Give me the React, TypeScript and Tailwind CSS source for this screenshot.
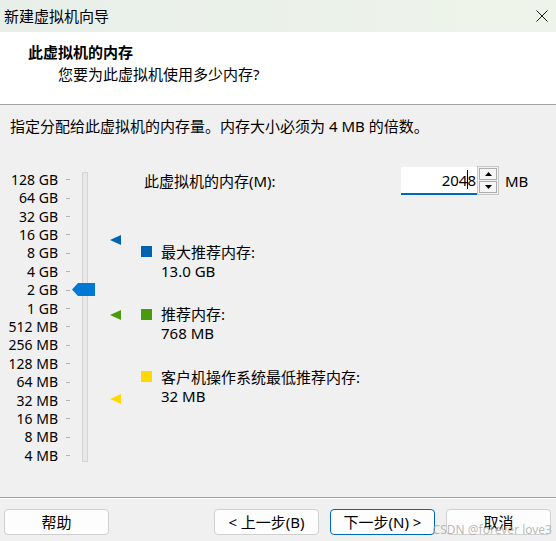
import React from 'react';

// 刻度标签，从上到下
const scaleLabels = [
  '128 GB', '64 GB', '32 GB', '16 GB', '8 GB', '4 GB', '2 GB', '1 GB',
  '512 MB', '256 MB', '128 MB', '64 MB', '32 MB', '16 MB', '8 MB', '4 MB',
];

const legends = [
  { color: 'bg-[#0063b1]', title: '最大推荐内存:', value: '13.0 GB', mt: 'mt-[46.5px]' },
  { color: 'bg-[#4a9a0e]', title: '推荐内存:', value: '768 MB', mt: 'mt-[24.5px]' },
  { color: 'bg-[#ffd800]', title: '客户机操作系统最低推荐内存:', value: '32 MB', mt: 'mt-[24.5px]' },
];

function Marker({ color, top }: { color: string; top: number }) {
  return (
    <svg className="absolute left-[110px]" style={{ top }} width="11" height="10" viewBox="0 0 11 10">
      <polygon points="0,5 11,0 11,10" fill={color} />
    </svg>
  );
}

function Button({ children, primary }: { children: React.ReactNode; primary?: boolean }) {
  return (
    <button
      className={`h-[26px] w-[105px] rounded-[4px] border bg-[#fdfdfd] text-[15px] leading-[20px] text-black ${
        primary ? 'border-[#0067c0]' : 'border-[#d0d0d0]'
      }`}
    >
      {children}
    </button>
  );
}

export default function App() {
  return (
    <div className="relative flex h-[541px] w-[556px] flex-col overflow-hidden bg-[#f0f0f0] font-['Noto_Sans','Noto_Sans_CJK_SC',sans-serif] text-[15px] leading-[20px] text-black">
      {/* 标题栏 */}
      <div className="flex h-[32px] shrink-0 items-center justify-between bg-gradient-to-r from-[#e8efe9] to-[#eef4ea] pl-[4px] pr-[8px]">
        <span className="text-[15px]">新建虚拟机向导</span>
        <svg width="12" height="12" viewBox="0 0 12 12">
          <path d="M0.5 0.5 L11.5 11.5 M11.5 0.5 L0.5 11.5" stroke="#1a1a1a" strokeWidth="1" />
        </svg>
      </div>

      {/* 页眉 */}
      <div className="h-[73px] shrink-0 border-b border-[#a0a0a0] bg-white pt-[10px]">
        <div className="pl-[28px] font-bold">此虚拟机的内存</div>
        <div className="mt-[2px] pl-[58px]">您要为此虚拟机使用多少内存?</div>
      </div>

      {/* 主体 */}
      <div className="flex-1 pl-[10px]">
        <p className="mt-[11px]">指定分配给此虚拟机的内存量。内存大小必须为 4 MB 的倍数。</p>

        <div className="-ml-[10px] mt-[29px] flex">
          {/* 滑块 */}
          <div className="relative w-[141px] shrink-0 pt-[5.5px]">
            <div className="flex">
              <div className="flex flex-col">
                {scaleLabels.map((l) => (
                  <div key={l} className="flex h-[18.42px] items-center">
                    <span className="w-[58px] whitespace-nowrap text-right text-[14px]">{l}</span>
                    <span className="ml-[8px] h-px w-[4px] bg-[#b4b4b4]" />
                  </div>
                ))}
              </div>
              <div className="mb-[3px] ml-[12px] mt-[1.5px] w-[6px] border border-[#d4d4d4] bg-[#e8e8e8]" />
            </div>
            <svg className="absolute left-[72px] top-[118px]" width="23" height="13" viewBox="0 0 23 13">
              <polygon points="0,6.5 6,0 23,0 23,13 6,13" fill="#0078d4" />
            </svg>
            <Marker color="#0063b1" top={69.5} />
            <Marker color="#4a9a0e" top={145} />
            <Marker color="#ffd800" top={229} />
          </div>

          {/* 右侧 */}
          <div className="flex flex-1 flex-col">
            <div className="flex h-[31px] items-center">
              <span className="w-[260px] pl-[3px]">此虚拟机的内存(M):</span>
              <div className="flex h-[28px] w-[76px] items-center justify-end border-b-2 border-[#0067c0] bg-white pr-[1px]">
                <span>204</span>
                <span className="-mr-[1px] inline-block h-[19px] w-px bg-black" />
                <span>8</span>
              </div>
              <div className="flex h-[29px] w-[22px] flex-col border border-[#c8c8c8] p-px">
                <div className="flex flex-1 items-center justify-center border border-[#adadad] bg-[#f6f6f6]">
                  <svg width="7" height="4" viewBox="0 0 7 4"><polygon points="3.5,0 7,4 0,4" fill="#000" /></svg>
                </div>
                <div className="mt-px flex flex-1 items-center justify-center border border-[#adadad] bg-[#f6f6f6]">
                  <svg width="7" height="4" viewBox="0 0 7 4"><polygon points="0,0 7,0 3.5,4" fill="#000" /></svg>
                </div>
              </div>
              <span className="ml-[6px]">MB</span>
            </div>

            {legends.map((g) => (
              <div key={g.title} className={`flex ${g.mt}`}>
                <span className={`mt-[3.5px] h-[11px] w-[11px] shrink-0 ${g.color}`} />
                <div className="ml-[9px] flex flex-col leading-[19px]">
                  <span>{g.title}</span>
                  <span>{g.value}</span>
                </div>
              </div>
            ))}
          </div>
        </div>
      </div>

      {/* 底部 */}
      <div className="h-[44px] shrink-0">
        <div className="h-px bg-[#a0a0a0]" />
        <div className="h-px bg-white" />
        <div className="flex pl-[4px] pr-[5px] pt-[10px]">
          <Button>帮助</Button>
          <div className="ml-auto flex gap-[11px]">
            <Button>&lt; 上一步(B)</Button>
            <Button primary>下一步(N) &gt;</Button>
            <Button>取消</Button>
          </div>
        </div>
      </div>

      {/* 水印 */}
      <span className="pointer-events-none absolute bottom-[3px] right-[4px] text-[12px] leading-[16px] text-[#a8a8a8]/80">
        CSDN @forever love3
      </span>
    </div>
  );
}
